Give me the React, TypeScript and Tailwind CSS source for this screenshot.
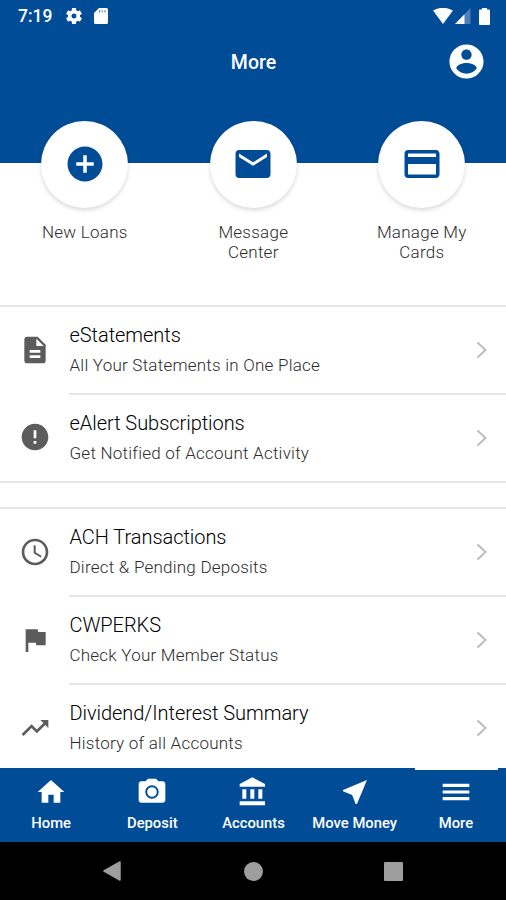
import type { ReactNode } from "react";
import clsx from "clsx";

const Icon = ({ d, className }: { d: string; className?: string }) => (
  <svg viewBox="0 0 24 24" fill="currentColor" className={clsx("shrink-0", className)}>
    <path d={d} />
  </svg>
);

const icons = {
  settings:
    "M19.14 12.94c.04-.3.06-.61.06-.94 0-.32-.02-.64-.07-.94l2.03-1.58c.18-.14.23-.41.12-.61l-1.92-3.32c-.12-.22-.37-.29-.59-.22l-2.39.96c-.5-.38-1.03-.7-1.62-.94l-.36-2.54c-.04-.24-.24-.41-.48-.41h-3.84c-.24 0-.43.17-.47.41l-.36 2.54c-.59.24-1.13.57-1.62.94l-2.39-.96c-.22-.08-.47 0-.59.22L2.74 8.87c-.12.21-.08.47.12.61l2.03 1.58c-.05.3-.09.63-.09.94s.02.64.07.94l-2.03 1.58c-.18.14-.23.41-.12.61l1.92 3.32c.12.22.37.29.59.22l2.39-.96c.5.38 1.03.7 1.62.94l.36 2.54c.05.24.24.41.48.41h3.84c.24 0 .44-.17.47-.41l.36-2.54c.59-.24 1.13-.56 1.62-.94l2.39.96c.22.08.47 0 .59-.22l1.92-3.32c.12-.22.07-.47-.12-.61l-2.01-1.58zM12 15c-1.65 0-3-1.35-3-3s1.35-3 3-3 3 1.35 3 3-1.35 3-3 3z",
  account:
    "M12 2C6.48 2 2 6.48 2 12s4.48 10 10 10 10-4.48 10-10S17.52 2 12 2zm0 3c1.66 0 3 1.34 3 3s-1.34 3-3 3-3-1.34-3-3 1.34-3 3-3zm0 14.2c-2.5 0-4.71-1.28-6-3.22.03-1.99 4-3.08 6-3.08 1.99 0 5.97 1.09 6 3.08-1.29 1.94-3.5 3.22-6 3.22z",
  add: "M12 2C6.48 2 2 6.48 2 12s4.48 10 10 10 10-4.48 10-10S17.52 2 12 2zm5 11h-4v4h-2v-4H7v-2h4V7h2v4h4v2z",
  mail: "M20 4H4c-1.1 0-1.99.9-1.99 2L2 18c0 1.1.9 2 2 2h16c1.1 0 2-.9 2-2V6c0-1.1-.9-2-2-2zm0 4l-8 5-8-5V6l8 5 8-5v2z",
  card: "M20 4H4c-1.11 0-1.99.89-1.99 2L2 18c0 1.11.89 2 2 2h16c1.11 0 2-.89 2-2V6c0-1.11-.89-2-2-2zm0 14H4v-6h16v6zm0-10H4V6h16v2z",
  document:
    "M14 2H6c-1.1 0-1.99.9-1.99 2L4 20c0 1.1.89 2 1.99 2H18c1.1 0 2-.9 2-2V8l-6-6zm2 16H8v-2h8v2zm0-4H8v-2h8v2zm-3-5V3.5L18.5 9H13z",
  alert: "M12 2C6.48 2 2 6.48 2 12s4.48 10 10 10 10-4.48 10-10S17.52 2 12 2zm1 15h-2v-2h2v2zm0-4h-2V7h2v6z",
  clock:
    "M11.99 2C6.47 2 2 6.48 2 12s4.47 10 9.99 10C17.52 22 22 17.52 22 12S17.52 2 11.99 2zM12 20c-4.42 0-8-3.58-8-8s3.58-8 8-8 8 3.58 8 8-3.58 8-8 8zm.5-13H11v6l5.25 3.15.75-1.23-4.5-2.67z",
  flag: "M14.4 6L14 4H5v17h2v-7h5.6l.4 2h7V6z",
  trending: "M16 6l2.29 2.29-4.88 4.88-4-4L2 16.59 3.41 18l6-6 4 4 6.3-6.29L22 12V6z",
  home: "M10 20v-6h4v6h5v-8h3L12 3 2 12h3v8z",
  camera:
    "M9 2L7.17 4H4c-1.1 0-2 .9-2 2v12c0 1.1.9 2 2 2h16c1.1 0 2-.9 2-2V6c0-1.1-.9-2-2-2h-3.17L15 2H9zm3 15c-2.76 0-5-2.24-5-5s2.24-5 5-5 5 2.24 5 5-2.24 5-5 5zM12 8.400a3.600 3.600 0 1 0 0 7.200 3.600 3.600 0 0 0 0-7.200z",
  bank: "M4 10v7h3v-7H4zm6 0v7h3v-7h-3zM2 22h19v-3H2v3zm14-12v7h3v-7h-3zm-4.5-9L2 6v2h19V6l-9.5-5z",
  send: "M21 3L3 10.53v.98l6.84 2.65L12.48 21h.98L21 3z",
  menu: "M2 18.200h20v-2.400H2v2.400zm0-5h20v-2.400H2v2.400zm0-7.400v2.400h20V5.800H2z",
};

const StatusBar = () => (
  <div className="flex h-8 items-center justify-between pl-[18px] pr-4">
    <div className="flex items-center">
      <span className="w-[46px] text-[17.5px] font-medium leading-8">7:19</span>
      <Icon d={icons.settings} className="size-[20px]" />
      <svg viewBox="0 0 14 16" className="ml-2.5 h-4 w-3.5">
        <path d="M5 0h7.5Q14 0 14 1.500v13q0 1.500-1.500 1.500h-11Q0 16 0 14.500V5z" fill="#fff" />
        <path d="M5.500 2v2.500M8.200 2v2.500M11 2v2.500" stroke="#6f94c3" strokeWidth="1.200" />
      </svg>
    </div>
    <div className="flex items-center">
      <svg viewBox="0 0 20 16" className="h-4 w-5">
        <path d="M0 2.500Q10-3 20 2.500L10 16z" fill="#fff" />
      </svg>
      <svg viewBox="0 0 16 16" className="ml-0.5 h-4 w-4">
        <path d="M15.500 0v16H0z" fill="#4d80b5" />
        <path d="M9.500 6.200V16H0z" fill="#fff" />
      </svg>
      <svg viewBox="0 0 11 17" className="ml-2 h-[17px] w-[11px]">
        <path d="M3 0h5v1.500h2Q11 1.500 11 2.500V16q0 1-1 1H1q-1 0-1-1V2.500q0-1 1-1h2z" fill="#fff" />
      </svg>
    </div>
  </div>
);

const shortcuts = [
  { icon: icons.add, label: "New Loans" },
  { icon: icons.mail, label: "Message Center" },
  { icon: icons.card, label: "Manage My Cards" },
];

const Shortcut = ({ icon, label }: { icon: string; label: string }) => (
  <button className="flex flex-col items-center">
    <span className="flex size-[87px] items-center justify-center rounded-full bg-white pb-px shadow-[0_2px_4px_rgba(0,0,0,0.16)]">
      <Icon d={icon} className="size-[42px] text-[#004c97]" />
    </span>
    <span className="mt-[14px] w-[100px] text-center text-[17px] font-light leading-5 tracking-[0.25px] text-[#2c2c2c]">{label}</span>
  </button>
);

const Row = ({ icon, title, subtitle, last }: { icon: string; title: string; subtitle: string; last?: boolean }) => (
  <button className={clsx("flex w-full items-stretch text-left", last ? "h-[86px]" : "h-[88px]")}>
    <span className="flex w-[69px] items-center justify-center pb-[2px] pl-px">
      <Icon d={icon} className="size-8 text-[#5c5c5c]" />
    </span>
    <span className={clsx("flex flex-1 items-center justify-between pr-[18px]", !last && "border-b-2 border-[#e6e6e6]")}>
      <span className="flex flex-col whitespace-nowrap pb-px pl-[0.5px]">
        <span className="text-[20px] font-light leading-[31px] tracking-[-0.05px] text-black">{title}</span>
        <span className="text-[17px] font-light leading-[28px] tracking-[0.23px] text-[#2c2c2c]">{subtitle}</span>
      </span>
      <svg viewBox="0 0 12 18" className="h-[18px] w-3" fill="none" stroke="#bdbdbd" strokeWidth="2">
        <path d="M1.500 1.500 9.500 9l-8 7.500" />
      </svg>
    </span>
  </button>
);

const Group = ({ children, className }: { children?: ReactNode; className?: string }) => (
  <section className={clsx("border-t-2 border-[#e6e6e6]", className)}>{children}</section>
);

const tabs = [
  { icon: icons.home, label: "Home" },
  { icon: icons.camera, label: "Deposit" },
  { icon: icons.bank, label: "Accounts" },
  { icon: icons.send, label: "Move Money" },
  { icon: icons.menu, label: "More", active: true },
];

const TabBar = () => (
  <nav className="grid h-[74px] shrink-0 grid-cols-5 bg-[#004c97] text-white">
    {tabs.map((tab) => (
      <button key={tab.label} className="relative flex flex-col items-center pl-px pt-2">
        {tab.active && <span className="absolute left-[10px] top-0 h-[2px] w-[83px] bg-white" />}
        <Icon d={tab.icon} className="size-8" />
        <span className="mt-[5px] whitespace-nowrap text-[14.8px] font-medium leading-5">{tab.label}</span>
      </button>
    ))}
  </nav>
);

const SystemNav = () => (
  <div className="flex h-[58px] shrink-0 items-center justify-between bg-black pl-[102px] pr-[103px]">
    <svg viewBox="0 0 20 22" className="h-[22px] w-5">
      <path d="M18 2v18L2 11z" fill="#9e9e9e" stroke="#9e9e9e" strokeWidth="1.500" strokeLinejoin="round" />
    </svg>
    <span className="size-[19px] rounded-full bg-[#9e9e9e]" />
    <span className="size-[19px] rounded-[1px] bg-[#9e9e9e]" />
  </div>
);

export default function App() {
  return (
    <div className="flex h-[900px] w-[506px] flex-col overflow-hidden bg-white font-[Roboto,sans-serif]">
      <header className="h-[163px] shrink-0 bg-[#004c97] text-white">
        <StatusBar />
        <div className="grid h-[58px] grid-cols-3 items-center px-5">
          <h1 className="col-start-2 pl-px pt-[3px] text-center text-[19.5px] font-medium">More</h1>
          <button className="-mr-px justify-self-end">
            <Icon d={icons.account} className="size-[41px]" />
          </button>
        </div>
      </header>
      <div className="-mt-[42px] grid h-[184px] shrink-0 grid-cols-3 items-start pl-[0.6px]">
        {shortcuts.map((s) => (
          <Shortcut key={s.label} {...s} />
        ))}
      </div>
      <main className="min-h-0 flex-1 overflow-hidden">
        <Group>
          <Row icon={icons.document} title="eStatements" subtitle="All Your Statements in One Place" />
          <Row icon={icons.alert} title="eAlert Subscriptions" subtitle="Get Notified of Account Activity" last />
        </Group>
        <Group className="h-[26px]" />
        <Group>
          <Row icon={icons.clock} title="ACH Transactions" subtitle="Direct & Pending Deposits" />
          <Row icon={icons.flag} title="CWPERKS" subtitle="Check Your Member Status" />
          <Row icon={icons.trending} title="Dividend/Interest Summary" subtitle="History of all Accounts" />
        </Group>
      </main>
      <TabBar />
      <SystemNav />
    </div>
  );
}
